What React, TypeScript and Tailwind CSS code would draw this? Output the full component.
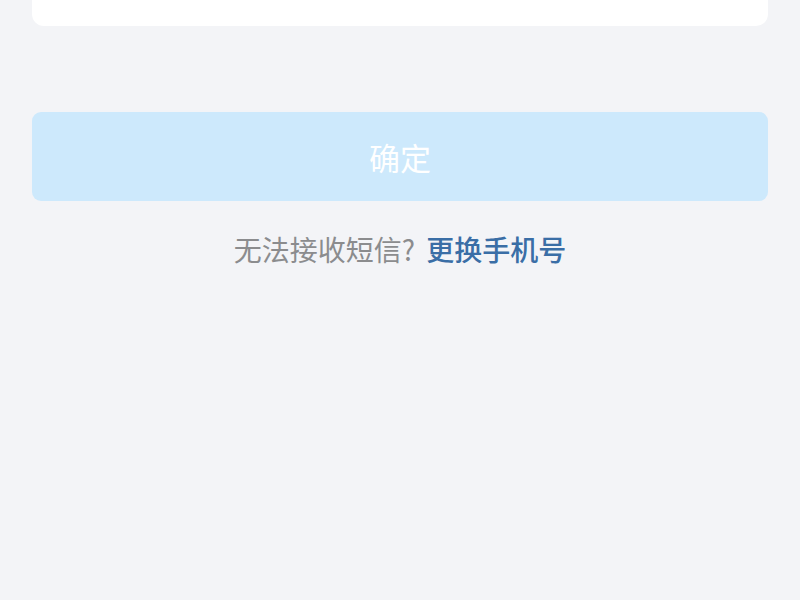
import React from 'react';

export default function App() {
  return (
    <div
      className="min-h-[600px] w-[800px] bg-[#f3f4f7] px-8"
      style={{ fontFamily: '"Noto Sans CJK SC", "Noto Sans", sans-serif' }}
    >
      {/* Card above (scrolled off) */}
      <div className="h-[26px] rounded-b-[12px] bg-white" />

      {/* Confirm button */}
      <button
        disabled
        className="mt-[86px] flex h-[89px] w-full items-center justify-center rounded-[9px] bg-[#cde9fc] text-[31px] leading-none text-white"
      >
        确定
      </button>

      {/* Change number hint */}
      <div className="mt-[30px] flex items-center justify-center text-[28px] leading-[36px]">
        <span className="text-[#8b8c8e]">无法接收短信?</span>
        <a className="ml-[11px] font-medium text-[#3a6ea6]">更换手机号</a>
      </div>
    </div>
  );
}
